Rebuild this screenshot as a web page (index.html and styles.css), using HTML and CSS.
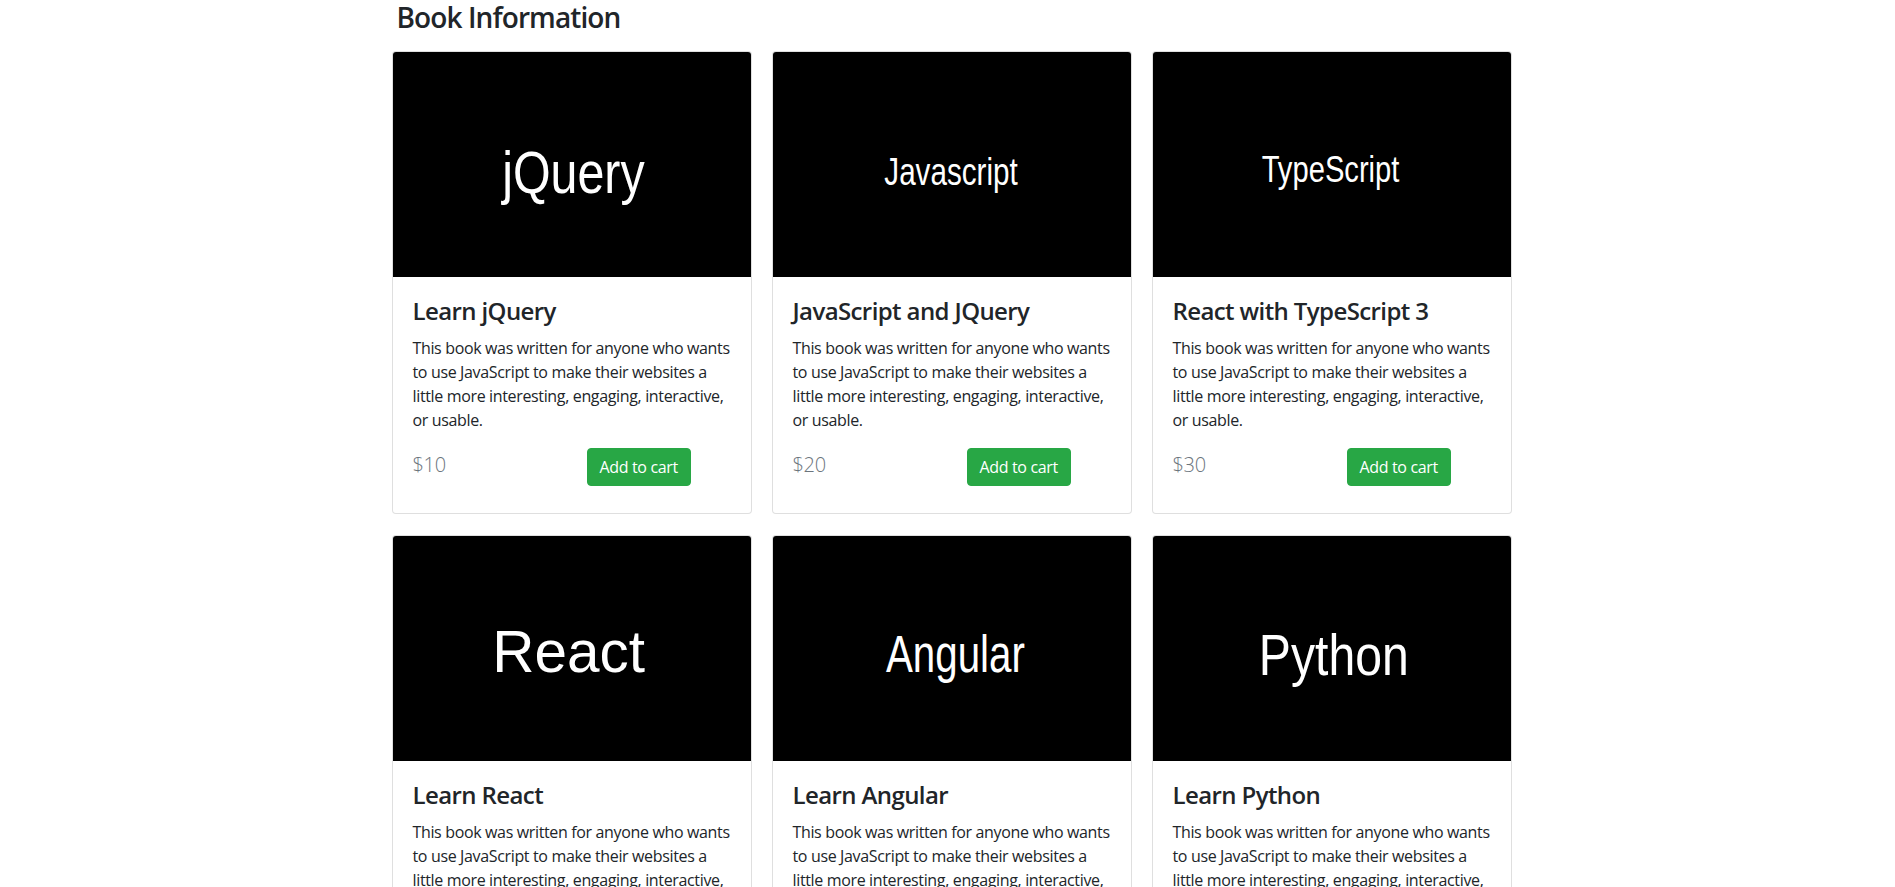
FILE: index.html
```html
<!DOCTYPE html>
<html lang="en">
<head>
<meta charset="utf-8">
<title>Book Information</title>
<link rel="stylesheet" href="styles.css">
</head>
<body>
<main class="container">
  <h3 class="page-title">Book Information</h3>
  <div class="book-grid">
    <div class="card">
      <div class="cover"><span class="cover-text cover-jquery">jQuery</span></div>
      <div class="card-body">
        <h4 class="card-title">Learn jQuery</h4>
        <p class="card-text">This book was written for anyone who wants to use JavaScript to make their websites a little more interesting, engaging, interactive, or usable.</p>
        <div class="buy-row">
          <p class="price">$10</p>
          <div><button class="btn">Add to cart</button></div>
        </div>
      </div>
    </div>
    <div class="card">
      <div class="cover"><span class="cover-text cover-js">Javascript</span></div>
      <div class="card-body">
        <h4 class="card-title">JavaScript and JQuery</h4>
        <p class="card-text">This book was written for anyone who wants to use JavaScript to make their websites a little more interesting, engaging, interactive, or usable.</p>
        <div class="buy-row">
          <p class="price">$20</p>
          <div><button class="btn">Add to cart</button></div>
        </div>
      </div>
    </div>
    <div class="card">
      <div class="cover"><span class="cover-text cover-ts">TypeScript</span></div>
      <div class="card-body">
        <h4 class="card-title">React with TypeScript 3</h4>
        <p class="card-text">This book was written for anyone who wants to use JavaScript to make their websites a little more interesting, engaging, interactive, or usable.</p>
        <div class="buy-row">
          <p class="price">$30</p>
          <div><button class="btn">Add to cart</button></div>
        </div>
      </div>
    </div>
    <div class="card">
      <div class="cover"><span class="cover-text cover-react">React</span></div>
      <div class="card-body">
        <h4 class="card-title">Learn React</h4>
        <p class="card-text">This book was written for anyone who wants to use JavaScript to make their websites a little more interesting, engaging, interactive, or usable.</p>
        <div class="buy-row">
          <p class="price">$40</p>
          <div><button class="btn">Add to cart</button></div>
        </div>
      </div>
    </div>
    <div class="card">
      <div class="cover"><span class="cover-text cover-angular">Angular</span></div>
      <div class="card-body">
        <h4 class="card-title">Learn Angular</h4>
        <p class="card-text">This book was written for anyone who wants to use JavaScript to make their websites a little more interesting, engaging, interactive, or usable.</p>
        <div class="buy-row">
          <p class="price">$50</p>
          <div><button class="btn">Add to cart</button></div>
        </div>
      </div>
    </div>
    <div class="card">
      <div class="cover"><span class="cover-text cover-python">Python</span></div>
      <div class="card-body">
        <h4 class="card-title">Learn Python</h4>
        <p class="card-text">This book was written for anyone who wants to use JavaScript to make their websites a little more interesting, engaging, interactive, or usable.</p>
        <div class="buy-row">
          <p class="price">$60</p>
          <div><button class="btn">Add to cart</button></div>
        </div>
      </div>
    </div>
  </div>
</main>
</body>
</html>
```
FILE: styles.css
```css
* { box-sizing: border-box; }
html, body { margin: 0; padding: 0; background: #fff; }
body {
  font-family: "Open Sans", "Noto Sans", "Liberation Sans", sans-serif;
  font-size: 16px;
  line-height: 1.5;
  color: #212529;
  letter-spacing: -0.35px;
}
.container {
  width: 1140px;
  margin: 0 auto;
  padding: 0 6px 0 14px;
}
.page-title {
  margin: 0 0 17px;
  padding-left: 5px;
  font-size: 28px;
  line-height: 34px;
  font-weight: 600;
  letter-spacing: -0.9px;
}
.book-grid {
  display: grid;
  grid-template-columns: repeat(3, 360px);
  column-gap: 20px;
  row-gap: 21px;
}
.card {
  border: 1px solid rgba(0, 0, 0, 0.125);
  border-radius: 4px;
  overflow: hidden;
  background: #fff;
}
.cover {
  height: 225px;
  background: #000;
  display: flex;
  align-items: center;
  justify-content: center;
  overflow: hidden;
}
.cover-text {
  font-family: "Liberation Sans", Arial, sans-serif;
  color: #fff;
  line-height: normal;
  letter-spacing: 0;
  white-space: nowrap;
}
.cover-jquery { font-size: 59px; transform: translate(1.5px, 7.5px) scaleX(0.82); }
.cover-js { font-size: 38px; transform: translate(-0.5px, 7.5px) scaleX(0.78); }
.cover-ts { font-size: 36px; transform: translate(-0.5px, 5px) scaleX(0.81); }
.cover-react { font-size: 59px; transform: translate(-2.5px, 4px) scaleX(0.99); }
.cover-angular { font-size: 51px; transform: translate(3.5px, 6px) scaleX(0.79); }
.cover-python { font-size: 58px; transform: translate(2.5px, 5.5px) scaleX(0.83); }

.card-body { padding: 20px; }
.card-title {
  margin: 0 0 10px;
  font-size: 24px;
  line-height: 28.8px;
  font-weight: 600;
  letter-spacing: -0.6px;
}
.card-text {
  margin: 0 0 16px;
  font-size: 16px;
  line-height: 24px;
}
.buy-row {
  display: grid;
  grid-template-columns: 174px 1fr;
}
.price {
  margin: 0 0 13px;
  padding-top: 2px;
  font-size: 20px;
  line-height: 30px;
  font-weight: 300;
  color: #6c757d;
  letter-spacing: -0.3px;
}
.btn {
  font-family: inherit;
  font-size: 16px;
  line-height: 24px;
  letter-spacing: -0.35px;
  padding: 6px 12px;
  color: #fff;
  background: #28a745;
  border: 1px solid #28a745;
  border-radius: 4px;
  cursor: pointer;
}
```
